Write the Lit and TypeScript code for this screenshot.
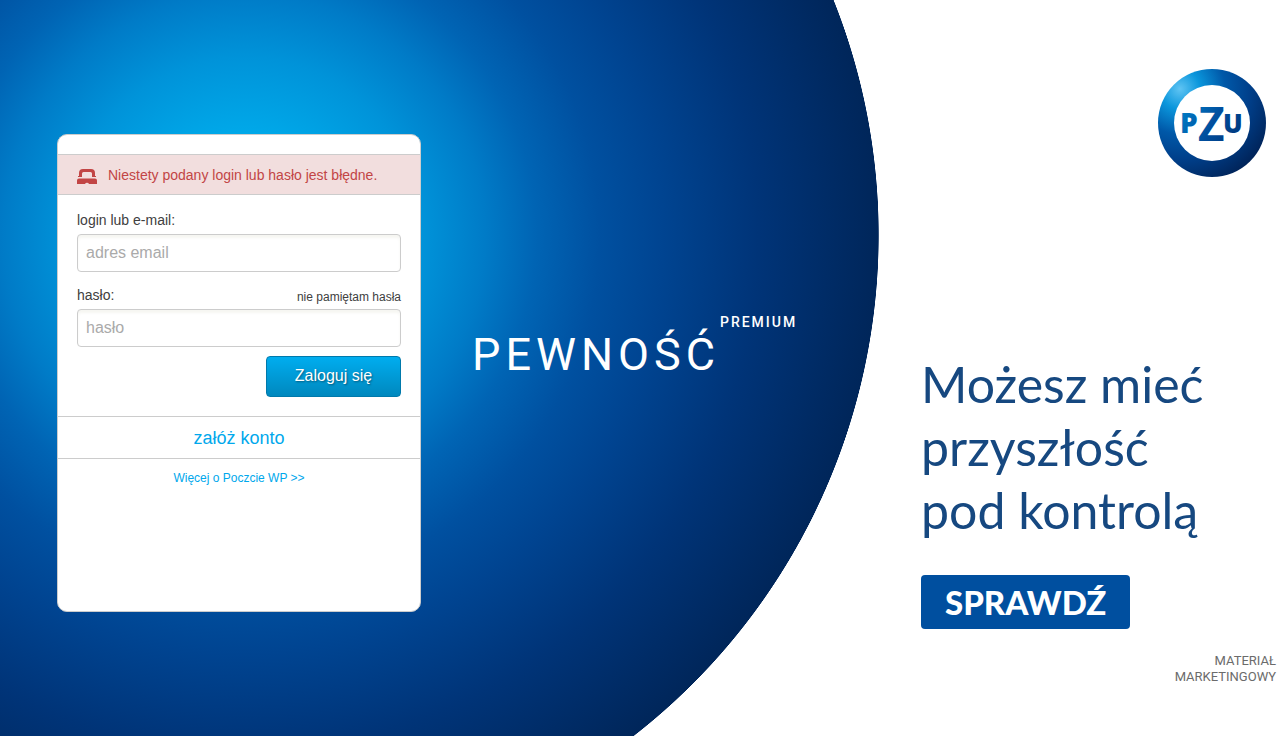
import { LitElement, html, css } from "lit";
import { customElement } from "lit/decorators.js";

@customElement("login-card")
class LoginCard extends LitElement {
  static styles = css`
    :host {
      display: block;
      box-sizing: border-box;
      width: 364px;
      min-height: 478px;
      padding-top: 19px;
      border: 1px solid #ccc;
      border-radius: 10px;
      background: #fff;
      color: #404040;
      font: 14px/16px "Liberation Sans", Arial, sans-serif;
    }
    .error {
      display: flex;
      align-items: center;
      gap: 11px;
      height: 39px;
      padding: 0 19px;
      border: solid #ccc;
      border-width: 1px 0;
      background: #f2dede;
      color: #c24545;
    }
    .error p { margin: 0; }
    .error svg { margin-top: 4px; }
    form { padding: 17px 19px 19px; }
    .field { margin-bottom: 15px; }
    .field.last { margin-bottom: 9px; }
    .caption {
      display: flex;
      justify-content: space-between;
      align-items: flex-end;
      margin-bottom: 6px;
    }
    .forgot { color: #404040; font-size: 12px; line-height: 12px; text-decoration: none; }
    input {
      display: block;
      box-sizing: border-box;
      width: 100%;
      height: 38px;
      padding: 0 8px;
      border: 1px solid #ccc;
      border-radius: 4px;
      background: #fff;
      box-shadow: inset 0 3px 3px #f6f6f2;
      color: #404040;
      font: 16px/20px "Liberation Sans", Arial, sans-serif;
    }
    input::placeholder { color: #aaa; opacity: 1; }
    button {
      display: block;
      min-width: 135px;
      height: 41px;
      margin-left: auto;
      padding: 0 24px 2px;
      border: 1px solid #0079ab;
      border-radius: 4px;
      background: linear-gradient(#00adef, #0088be);
      color: #fff;
      font: 16px/20px "Liberation Sans", Arial, sans-serif;
      text-shadow: 1px 1px 2px rgba(0, 0, 0, 0.4);
      cursor: pointer;
    }
    .register {
      display: block;
      padding: 11px 0 9px;
      border: solid #ccc;
      border-width: 1px 0;
      color: #00a8ec;
      font-size: 18px;
      line-height: 21px;
      text-align: center;
      text-decoration: none;
    }
    .more {
      display: block;
      padding-top: 11px;
      color: #00a8ec;
      font-size: 12px;
      text-align: center;
      text-decoration: none;
    }
  `;

  render() {
    return html`
      <div class="error" role="alert">
        <svg width="20" height="15" viewBox="0 0 20 15" fill="#c24545" aria-hidden="true">
          <path d="M6 0h8q4 0 4 4v3h1v1h-4V4.500Q15 3 13.500 3h-7Q5 3 5 4.500V8H1V7h1V4q0-4 4-4z" />
          <path d="M2 9.500h16q2 0 2 2V15h-8q-.5-1.200-2-1.200T8 15H0v-3.500q0-2 2-2z" />
        </svg>
        <p>Niestety podany login lub hasło jest błędne.</p>
      </div>
      <form @submit=${(e: Event) => e.preventDefault()}>
        <div class="field">
          <div class="caption"><label for="login">login lub e-mail:</label></div>
          <input id="login" type="text" placeholder="adres email" />
        </div>
        <div class="field last">
          <div class="caption">
            <label for="password">hasło:</label>
            <a class="forgot" href="#">nie pamiętam hasła</a>
          </div>
          <input id="password" type="password" placeholder="hasło" />
        </div>
        <button type="submit">Zaloguj się</button>
      </form>
      <a class="register" href="#">załóż konto</a>
      <a class="more" href="#">Więcej o Poczcie WP &gt;&gt;</a>
    `;
  }
}

@customElement("pzu-logo")
class PzuLogo extends LitElement {
  static styles = css`
    :host, svg { display: block; }
    text { font-family: "Open Sans", sans-serif; font-weight: 800; }
    .tall { font-family: "Noto Sans CJK SC", "Noto Sans", sans-serif; font-weight: 700; }
  `;

  render() {
    return html`
      <svg width="108" height="108" viewBox="0 0 108 108" role="img" aria-label="PZU">
        <defs>
          <radialGradient id="ring" gradientUnits="userSpaceOnUse" cx="22" cy="20" r="100">
            <stop offset="0" stop-color="#5fc4f3" />
            <stop offset=".2" stop-color="#0a96dc" />
            <stop offset=".45" stop-color="#0058a8" />
            <stop offset=".7" stop-color="#003f8a" />
            <stop offset="1" stop-color="#00245a" />
          </radialGradient>
          <linearGradient id="mark" gradientUnits="userSpaceOnUse" x1="25" y1="35" x2="84" y2="72">
            <stop offset="0" stop-color="#0080c9" />
            <stop offset=".5" stop-color="#004f9f" />
            <stop offset="1" stop-color="#003478" />
          </linearGradient>
        </defs>
        <circle cx="54" cy="54" r="54" fill="url(#ring)" />
        <circle cx="54" cy="54" r="38" fill="#fff" />
        <g fill="url(#mark)">
          <text x="22" y="64" font-size="28">P</text>
          <text class="tall" x="53" y="72" font-size="46" text-anchor="middle">Z</text>
          <text x="65" y="64" font-size="26">U</text>
        </g>
      </svg>
    `;
  }
}

@customElement("app-root")
class AppRoot extends LitElement {
  static styles = css`
    :host {
      display: block;
      min-height: 100vh;
      background: radial-gradient(
        circle 635px at 244px 235px,
        #00b2ef 0%, #00aaea 15%, #0093d9 28%, #007bc7 38%, #0064b4 46%,
        #0050a0 56%, #004491 66%, #003478 81%, #00265a 99.900%, #fff 100%
      );
    }
    main { display: flex; align-items: flex-start; }
    login-card { flex: none; margin: 134px 0 0 57px; }
    .product {
      display: flex;
      align-items: flex-start;
      margin: 314px 0 0 51px;
      color: #fff;
      font-family: Roboto, sans-serif;
      text-decoration: none;
    }
    .name { padding-top: 13px; font-size: 45px; line-height: 56px; font-weight: 400; letter-spacing: 5px; }
    .tier { font-size: 14px; line-height: 16px; font-weight: 500; letter-spacing: 2px; }
    .offer {
      flex: none;
      display: flex;
      flex-direction: column;
      align-items: flex-start;
      box-sizing: border-box;
      width: 359px;
      margin-left: auto;
      padding-top: 69px;
    }
    pzu-logo { align-self: flex-end; margin-right: 14px; }
    h1 {
      margin: 176px 0 0;
      color: #164880;
      font: 400 50px/63px Lato, "Noto Sans", sans-serif;
    }
    .cta {
      margin-top: 33px;
      padding: 0 24px;
      border-radius: 4px;
      background: #004f9f;
      color: #fff;
      font: 900 33px/54px Lato, "Noto Sans", sans-serif;
      text-decoration: none;
    }
    .note {
      align-self: flex-end;
      margin: 24px 4px 0 0;
      color: #6b6b6b;
      font: 400 13px/16px Roboto, sans-serif;
      text-align: right;
    }
  `;

  render() {
    return html`
      <main>
        <login-card></login-card>
        <a class="product" href="#">
          <span class="name">PEWNOŚĆ</span><span class="tier">PREMIUM</span>
        </a>
        <section class="offer">
          <pzu-logo></pzu-logo>
          <h1>Możesz mieć<br />przyszłość<br />pod kontrolą</h1>
          <a class="cta" href="#">SPRAWDŹ</a>
          <p class="note">MATERIAŁ<br />MARKETINGOWY</p>
        </section>
      </main>
    `;
  }
}
